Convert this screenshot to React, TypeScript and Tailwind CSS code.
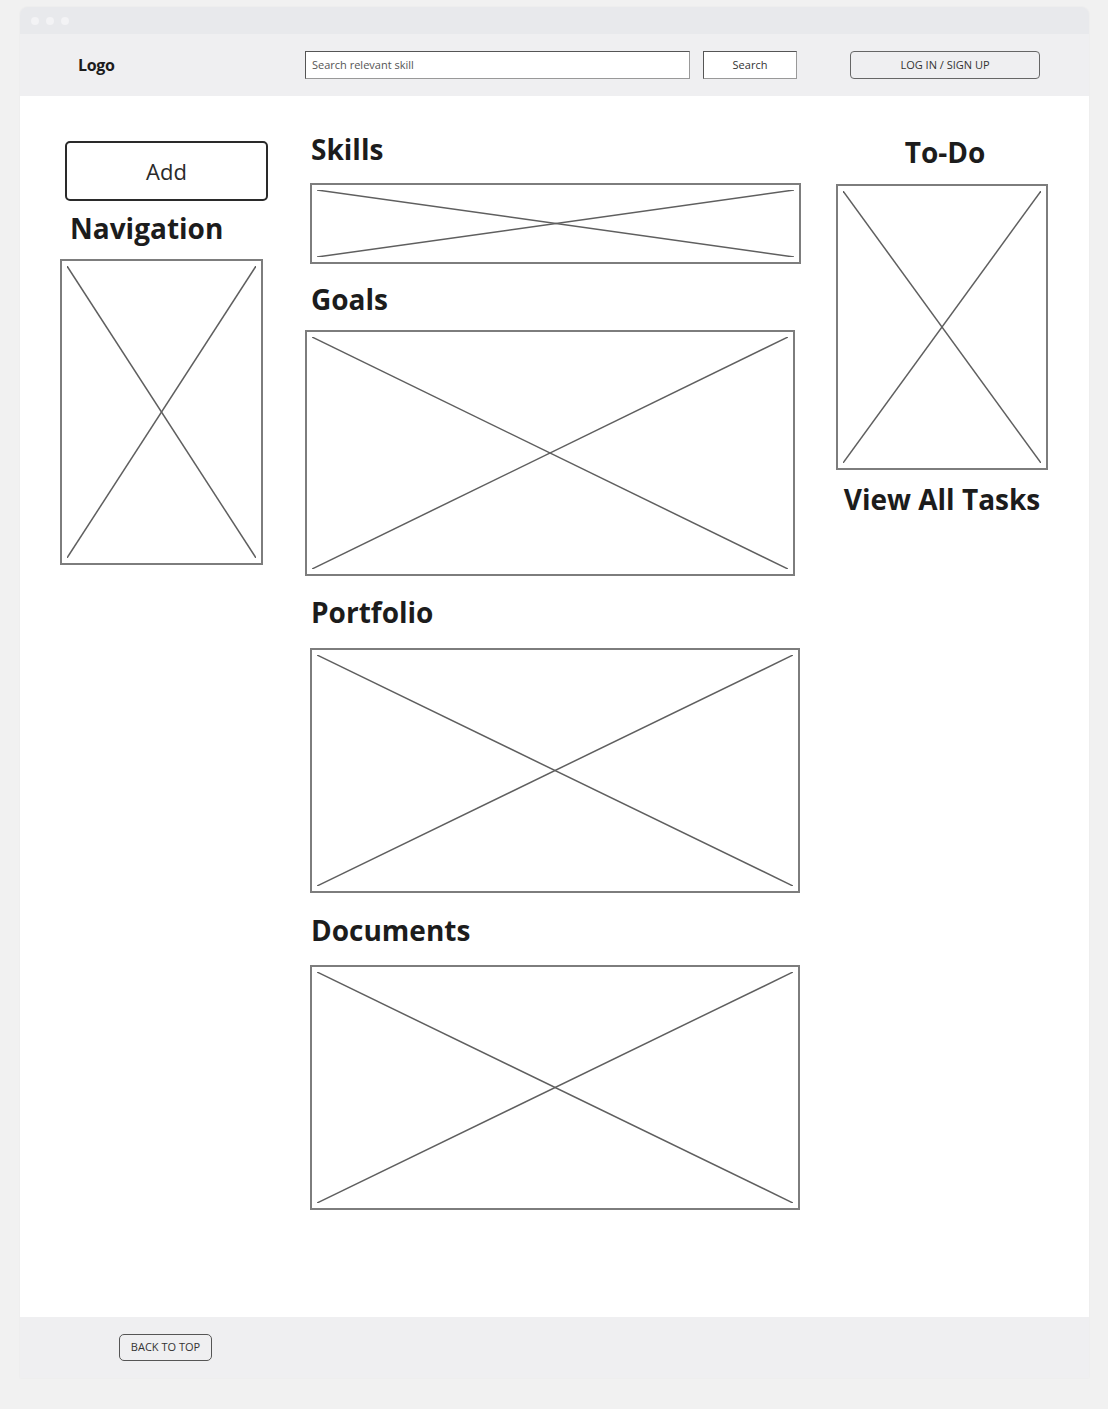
const font = { fontFamily: '"Open Sans", "Noto Sans", sans-serif' };

function Placeholder({ className }: { className: string }) {
  return (
    <div className={`border-2 border-[#7d7d7d] bg-white p-[5px] ${className}`}>
      <svg
        className="block h-full w-full"
        viewBox="0 0 100 100"
        preserveAspectRatio="none"
      >
        <line x1="0" y1="0" x2="100" y2="100" stroke="#5f5f5f" strokeWidth="1.5" vectorEffect="non-scaling-stroke" />
        <line x1="100" y1="0" x2="0" y2="100" stroke="#5f5f5f" strokeWidth="1.5" vectorEffect="non-scaling-stroke" />
      </svg>
    </div>
  );
}

function Heading({ children, className = '' }: { children: React.ReactNode; className?: string }) {
  return (
    <h2 className={`text-[28px] font-bold leading-[38px] text-[#1c1c1c] ${className}`}>
      {children}
    </h2>
  );
}

export default function App() {
  return (
    <div className="min-h-[1409px] bg-[#f1f1f1] pt-[7px] pl-[20px]" style={font}>
      <div className="w-[1069px] overflow-hidden rounded-t-[8px] shadow-[0_0_2px_rgba(0,0,0,0.06)]">
        {/* window bar */}
        <div className="flex h-[27px] items-center gap-[7px] bg-[#e8e9ec] pl-[11px]">
          <span className="h-[8px] w-[8px] rounded-full bg-[#f3f3f5]" />
          <span className="h-[8px] w-[8px] rounded-full bg-[#f3f3f5]" />
          <span className="h-[8px] w-[8px] rounded-full bg-[#f3f3f5]" />
        </div>

        {/* header */}
        <header className="flex h-[62px] items-center bg-[#efeff1] pl-[58px]">
          <span className="w-[227px] text-[16px] font-bold tracking-[-0.3px] text-[#1c1c1c]">Logo</span>
          <div className="flex h-[28px] w-[385px] items-center border border-[#555] border-b-[#999] border-r-[#999] bg-white px-[6px] text-[11px] text-[#555]">
            Search relevant skill
          </div>
          <button className="ml-[13px] flex h-[28px] w-[94px] items-center justify-center border border-[#555] border-b-[#999] border-r-[#999] bg-white text-[11px] text-[#333]">
            Search
          </button>
          <button className="ml-[53px] flex h-[28px] w-[190px] items-center justify-center rounded-[4px] border border-[#666] bg-[#efeff1] text-[11px] text-[#333]">
            LOG IN / SIGN UP
          </button>
        </header>

        {/* main */}
        <main className="flex h-[1221px] bg-white pl-[40px]">
          {/* left column */}
          <div className="flex w-[250px] flex-col">
            <button className="ml-[5px] mt-[45px] flex h-[60px] w-[203px] items-center justify-center rounded-[5px] border-2 border-[#2a2a2a] bg-white text-[22px] text-[#2a2a2a]">
              Add
            </button>
            <Heading className="ml-[10px] mt-[8px]">Navigation</Heading>
            <Placeholder className="mt-[12px] h-[306px] w-[203px]" />
          </div>

          {/* middle column */}
          <div className="flex w-[526px] flex-col">
            <Heading className="ml-[1px] mt-[34px]">Skills</Heading>
            <Placeholder className="mt-[15px] h-[81px] w-[491px]" />
            <Heading className="ml-[1px] mt-[16px]">Goals</Heading>
            <Placeholder className="-ml-[5px] mt-[12px] h-[246px] w-[490px]" />
            <Heading className="ml-[1px] mt-[17px]">Portfolio</Heading>
            <Placeholder className="mt-[17px] h-[245px] w-[490px]" />
            <Heading className="ml-[1px] mt-[18px]">Documents</Heading>
            <Placeholder className="mt-[16px] h-[245px] w-[490px]" />
          </div>

          {/* right column */}
          <div className="flex w-[212px] flex-col items-center">
            <Heading className="ml-[6px] mt-[37px]">To-Do</Heading>
            <Placeholder className="mt-[13px] h-[286px] w-[212px]" />
            <Heading className="mt-[10px]">View All Tasks</Heading>
          </div>
        </main>

        {/* footer */}
        <footer className="flex h-[61px] items-center bg-[#efeff1] pl-[99px]">
          <button className="flex h-[27px] w-[93px] items-center justify-center rounded-[5px] border border-[#555] bg-[#efeff1] text-[11px] text-[#333]">
            BACK TO TOP
          </button>
        </footer>
      </div>
    </div>
  );
}
